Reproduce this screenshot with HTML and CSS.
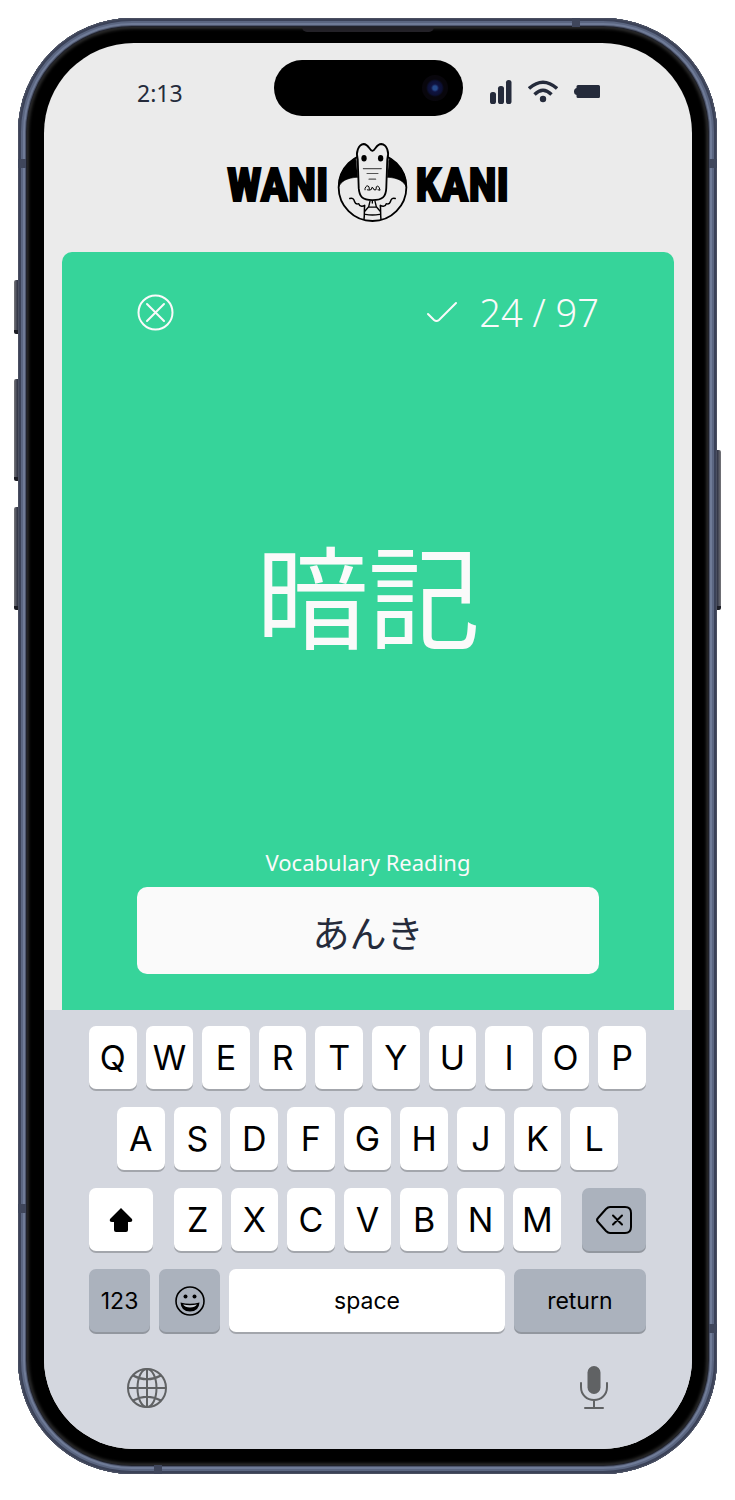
FILE: index.html
```html
<!DOCTYPE html>
<html lang="en">
<head>
<meta charset="utf-8">
<meta name="viewport" content="width=device-width, initial-scale=1">
<title>WaniKani Review</title>
<link rel="stylesheet" href="styles.css">
</head>
<body>
<div class="phone">
  <span class="side-button action"></span>
  <span class="side-button volume-up"></span>
  <span class="side-button volume-down"></span>
  <span class="side-button power"></span>
  <span class="band band-left-top"></span>
  <span class="band band-left-bottom"></span>
  <span class="band band-right-top"></span>
  <span class="band band-right-bottom"></span>
  <span class="band band-top"></span>
  <span class="band band-bottom"></span>
  <span class="speaker"></span>
  <div class="screen">
    <header class="status">
      <time class="clock">2:13</time>
      <div class="island"><span class="camera"></span></div>
      <div class="status-icons">
        <svg width="22" height="24" viewBox="0 0 22 24" fill="#252b3b"><rect x="0" y="12" width="6" height="12" rx="2.6"/><rect x="8" y="6" width="6" height="18" rx="2.6"/><rect x="16" y="0" width="5.5" height="24" rx="2.6"/></svg>
        <svg width="30" height="24" viewBox="0 0 30 24" fill="none" stroke="#252b3b" stroke-width="3.400"><path d="M1 8.500Q15-4 29 8.500M6.500 14.500Q15 6 23.500 14.500"/><circle cx="15" cy="19" r="3.200" fill="#252b3b" stroke="none"/></svg>
        <svg width="26" height="24" viewBox="0 0 26 24" fill="#252b3b"><path d="M4 5h20.500q1.500 0 1.500 1.500v10q0 1.500-1.500 1.500H4q-1.500 0-1.500-1.500V15Q0 14.500 0 11.500T2.500 8V6.500Q2.500 5 4 5z"/></svg>
      </div>
    </header>
    <h1 class="logo">
      <span class="logo-word">WANI</span>
      <svg class="logo-mark" viewBox="22 15 213 238" fill="none" stroke="#000" stroke-width="5.500" stroke-linecap="round" stroke-linejoin="round">
        <circle cx="128.500" cy="148" r="102" fill="#ebebeb"/>
        <path d="M78 60C46 78 26 110 26 149C34 130 50 120 84 118ZM179 60C211 78 231 110 231 149C223 130 207 120 173 118Z" fill="#000" stroke-width="2"/>
        <path d="M60 182C68 179 73 184 75 193C78 202 84 198 87 198C90 209 101 206 105 203C103 217 105 232 103 244M197 182C189 179 184 184 182 193C179 202 173 198 170 198C167 209 156 206 152 203C154 217 152 232 154 244" stroke-width="4.500"/>
        <path d="M121 190L117 207L106 220M136 190L140 207L151 220M117 208H140M107 230Q128 234 150 230M128 190V196" stroke-width="4"/>
        <path d="M84 64C77 45 86 19 102 18C117 18 119 38 128 39C137 38 139 18 155 18C172 19 180 45 173 64L170 151C169 177 159 187 128 187C98 187 89 177 87 151Z" fill="#ebebeb"/>
        <path d="M106 156V152Q111 139 118 147L119 155M113 156L119 157L125 155Q126 145 130 150L133 156H139L140 147Q147 140 151 156M145 156L150 157" stroke-width="3"/>
        <path d="M101 92H155M112 107H145M118 124H138" stroke="#555" stroke-width="3.500"/>
        <ellipse cx="103" cy="61" rx="8" ry="10" fill="#000" stroke="none"/><ellipse cx="153" cy="61" rx="8" ry="10" fill="#000" stroke="none"/>
      </svg>
      <span class="logo-word">KANI</span>
    </h1>
    <main class="card">
      <div class="card-top">
        <button class="close" aria-label="Close">
          <svg width="37" height="37" viewBox="0 0 37 37" fill="none" stroke="#fafafa" stroke-width="2" stroke-linecap="round"><circle cx="18.500" cy="18.500" r="17"/><path d="M10 10L27 27M27 10L10 27"/></svg>
        </button>
        <div class="progress">
          <svg width="30" height="22" viewBox="0 0 30 22" fill="none" stroke="#fafafa" stroke-width="2" stroke-linecap="round"><path d="M1 13L7 19Q9.500 21 12 19L29 2"/></svg>
          <span>24 / 97</span>
        </div>
      </div>
      <p class="word" lang="ja">暗記</p>
      <label class="prompt" for="answer">Vocabulary Reading</label>
      <input class="answer" id="answer" type="text" lang="ja" value="あんき">
    </main>
    <section class="keyboard" aria-label="Keyboard">
      <div class="keys">
        <div class="key-row"><button>Q</button><button>W</button><button>E</button><button>R</button><button>T</button><button>Y</button><button>U</button><button>I</button><button>O</button><button>P</button></div>
        <div class="key-row middle"><button>A</button><button>S</button><button>D</button><button>F</button><button>G</button><button>H</button><button>J</button><button>K</button><button>L</button></div>
        <div class="key-row lower">
          <button class="shift" aria-label="Shift"><svg width="24" height="26" viewBox="0 0 24 26"><path d="M12 1L23 12Q24 15 21 15H19V23Q19 25 17 25H7Q5 25 5 23V15H3Q0 15 1 12Z"/></svg></button>
          <div class="key-row letters"><button>Z</button><button>X</button><button>C</button><button>V</button><button>B</button><button>N</button><button>M</button></div>
          <button class="shift gray" aria-label="Delete"><svg width="36" height="28" viewBox="0 0 36 28" fill="none" stroke="#000" stroke-width="2" stroke-linecap="round" stroke-linejoin="round"><path d="M14 1H29Q35 1 35 7V21Q35 27 29 27H14Q12 27 10 25L2 16Q0 14 2 12L10 3Q12 1 14 1ZM17 9.500L26 18.500M26 9.500L17 18.500"/></svg></button>
        </div>
        <div class="key-row bottom">
          <button class="gray small">123</button>
          <button class="gray small" aria-label="Emoji"><svg width="30" height="30" viewBox="0 0 30 30"><circle cx="15" cy="15" r="14" fill="none" stroke="#000" stroke-width="1.600"/><circle cx="10.500" cy="10.500" r="2"/><circle cx="19.500" cy="10.500" r="2"/><path d="M5.500 16.500Q15 19 24.500 16.500Q24 25.500 15 25.500T5.500 16.500Z"/><path d="M8 18.500Q15 20 22 18.500Q20 21.500 15 21.500T8 18.500Z" fill="#c8cdd4"/></svg></button>
          <button class="space">space</button>
          <button class="gray return">return</button>
        </div>
      </div>
      <div class="keyboard-foot">
        <button aria-label="Switch keyboard"><svg width="40" height="40" viewBox="0 0 40 40" fill="none" stroke="#606264" stroke-width="2"><circle cx="20" cy="20" r="19"/><ellipse cx="20" cy="20" rx="9.500" ry="19"/><path d="M20 1V39M1 20H39M6 7.500Q20 15 34 7.500M6 32.500Q20 25 34 32.500"/></svg></button>
        <button aria-label="Dictate"><svg width="28" height="44" viewBox="0 0 28 44" fill="none" stroke="#606264" stroke-width="2" stroke-linecap="round"><rect x="7.500" y="0" width="13" height="28" rx="6.500" fill="#606264" stroke="none"/><path d="M1 17V21C1 29 7 34 14 34S27 29 27 21V17M14 34V41M5 42H23"/></svg></button>
      </div>
    </section>
  </div>
</div>
</body>
</html>
```
FILE: styles.css
```css
* {
  box-sizing: border-box;
}

body {
  margin: 0;
  min-height: 100vh;
  padding: 18px 18px 26px;
  display: flex;
  background: #fff;
  font-family: "Noto Sans", "Noto Sans CJK JP", sans-serif;
  color: #252b3b;
}

button {
  padding: 0;
  border: 0;
  background: none;
  font: inherit;
  color: inherit;
}

svg {
  display: block;
  flex: none;
}

.phone {
  position: relative;
  flex: 1;
  display: flex;
  padding: 25px 25px 25px 26px;
  border-radius: 114px;
  background: #000;
  box-shadow:
    inset 0 0 0 1px #4a4f60,
    inset 0 0 0 3px #3b4258,
    inset 0 0 0 5px #5b6681,
    inset 0 0 0 7px #6f7b97,
    inset 0 0 0 8px #4e566c,
    inset 0 0 0 9px #20222b,
    inset 0 0 3px 11px #2a2a2a;
}

.screen {
  flex: 1;
  min-width: 0;
  display: flex;
  flex-direction: column;
  overflow: hidden;
  border-radius: 90px;
  background: #ebebeb;
}

.side-button {
  position: absolute;
  left: -4px;
  width: 4px;
  border-radius: 2px 0 0 2px;
  background: linear-gradient(90deg, #77777b, #2c3042);
  border-bottom: 4px solid #1c1d25;
}

.action { top: 262px; height: 54px; }
.volume-up { top: 361px; height: 102px; }
.volume-down { top: 489px; height: 103px; }

.power {
  left: auto;
  right: -4px;
  top: 432px;
  height: 160px;
  border-radius: 0 2px 2px 0;
  background: linear-gradient(90deg, #2c3042, #77777b);
}

.band {
  position: absolute;
  width: 8px;
  height: 9px;
  background: #3f465b;
}

.band-left-top { left: 0; top: 141px; }
.band-left-bottom { left: 0; bottom: 261px; }
.band-right-top { right: 0; top: 141px; }
.band-right-bottom { right: 0; bottom: 141px; }
.band-top { top: 0; right: 137px; }
.band-bottom { bottom: 0; left: 136px; }

.speaker {
  position: absolute;
  top: 9px;
  left: 50%;
  width: 132px;
  height: 5px;
  margin-left: -66px;
  border-radius: 0 0 5px 5px;
  background: #232127;
}

.status {
  display: grid;
  grid-template-columns: 1fr 189px 1fr;
  align-items: center;
  padding: 17px 92px 0 93px;
}

.clock {
  font-size: 23px;
  line-height: 32px;
  padding-top: 10px;
}

.island {
  height: 56px;
  display: flex;
  align-items: center;
  justify-content: flex-end;
  padding-right: 15px;
  border-radius: 28px;
  background: #000;
}

.camera {
  width: 26px;
  height: 26px;
  border-radius: 50%;
  background: radial-gradient(circle, #254a8c 0 2px, #101340 4px, #0c1034 7px, #08060c 9px);
}

.status-icons {
  display: flex;
  justify-content: flex-end;
  gap: 16px;
  padding-top: 7px;
}

.logo {
  display: flex;
  align-items: center;
  justify-content: center;
  gap: 8px;
  margin: 24px 0 27px;
  color: #000;
  font-family: "Roboto Condensed", "Open Sans Condensed", "Liberation Sans Narrow", "Noto Sans", sans-serif;
  font-size: 46px;
  font-weight: 700;
  line-height: 79px;
}

.logo-word {
  padding-top: 6px;
  -webkit-text-stroke: 2px #000;
}

.logo-mark {
  width: 71px;
  height: 79px;
}

.card {
  flex: 1;
  display: flex;
  flex-direction: column;
  margin: 0 18px;
  padding: 36px 75px;
  border-radius: 10px 10px 0 0;
  background: #36d49a;
  color: #fafafa;
}

.card-top,
.progress {
  display: flex;
  align-items: center;
  justify-content: space-between;
}

.progress {
  gap: 22px;
  font-size: 38px;
  font-weight: 300;
  line-height: 48px;
}

.word {
  flex: 1;
  display: flex;
  align-items: center;
  justify-content: center;
  margin: 0;
  font-family: "Noto Sans CJK JP", sans-serif;
  font-size: 112px;
  line-height: 160px;
}

.prompt {
  margin-bottom: 10px;
  font-size: 22px;
  line-height: 30px;
  text-align: center;
}

.answer {
  width: 100%;
  height: 87px;
  padding: 2px 16px 0;
  border: 0;
  border-radius: 10px;
  background: #fafafa;
  color: #252b3b;
  font-family: "Noto Sans CJK JP", sans-serif;
  font-size: 37px;
  text-align: center;
}

.keyboard {
  padding: 16px 46px 39px 45px;
  background: #d4d7df;
  color: #000;
  font-family: Inter, sans-serif;
}

.keys {
  display: flex;
  flex-direction: column;
  gap: 18px;
}

.key-row {
  display: flex;
  gap: 9px;
}

.key-row button {
  flex: 1;
  min-width: 0;
  height: 63px;
  display: flex;
  align-items: center;
  justify-content: center;
  border-radius: 7px;
  background: #fff;
  box-shadow: 0 2px 0 #a3a6ac;
  font-size: 34px;
}

.middle {
  padding: 0 28px;
}

.lower {
  gap: 21px;
}

.letters {
  flex: 1;
}

.key-row .shift {
  flex: 0 0 64px;
}

.key-row .gray {
  background: #abb2bd;
  box-shadow: 0 2px 0 #92979f;
}

.bottom button {
  font-size: 23px;
}

.bottom .small {
  flex: 61;
}

.bottom .space {
  flex: 275;
}

.bottom .return {
  flex: 132;
}

.keyboard-foot {
  display: flex;
  align-items: center;
  justify-content: space-between;
  padding: 34px 38px 0;
}
```
